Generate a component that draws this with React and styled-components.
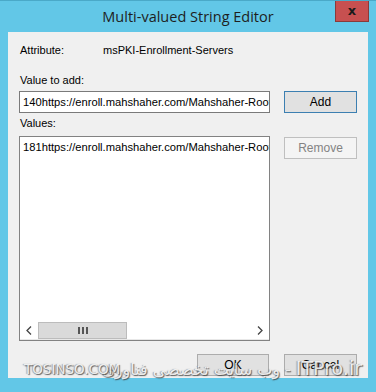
import React from "react";
import styled, { createGlobalStyle } from "styled-components";

const Global = createGlobalStyle`
  html, body { margin: 0; padding: 0; background: #5fc6e6; }
  body { font-family: "Liberation Sans", Arial, sans-serif; }
`;

const Window = styled.div`
  width: 376px;
  height: 392px;
  box-sizing: border-box;
  background: #62c7e7;
  border-top: 1px solid #4aa9c8;
  display: flex;
  flex-direction: column;
  padding: 0 8px 14px 8px;
  position: relative;
  overflow: hidden;
`;

const TitleBar = styled.div`
  height: 31px;
  display: grid;
  grid-template-columns: 1fr auto 1fr;
  align-items: start;
  margin: 0 -8px;
  padding: 0 7px 0 7px;
`;

const Title = styled.div`
  grid-column: 2;
  font-family: "Open Sans", "Noto Sans", sans-serif;
  font-size: 14.5px;
  color: #1e1e1e;
  line-height: 30px;
  padding-top: 1px;
`;

const Close = styled.div`
  grid-column: 3;
  justify-self: end;
  width: 32px;
  height: 21px;
  margin-top: -1px;
  background: #c75050;
  border: 1px solid #8a3a3a;
  border-top: none;
  display: flex;
  align-items: center;
  justify-content: center;
  font-family: "DejaVu Sans", sans-serif;
  font-weight: bold;
  font-size: 13px;
  color: #1a1a1a;
`;

const Content = styled.div`
  flex: 1;
  background: #f0f0f0;
  padding: 11px 11px 0 11px;
  display: flex;
  flex-direction: column;
  font-size: 11px;
  color: #000;
`;

const AttrRow = styled.div`
  display: grid;
  grid-template-columns: 83px 1fr;
  line-height: 14px;
  padding-left: 1px;
`;

const Label = styled.div`
  line-height: 14px;
  margin-top: ${(p) => p.$mt}px;
  padding-left: 1px;
`;

const Grid = styled.div`
  display: grid;
  grid-template-columns: 251px 73px;
  column-gap: 14px;
  margin-top: ${(p) => p.$mt}px;
  align-items: start;
`;

const TextBox = styled.div`
  height: 22px;
  box-sizing: border-box;
  border: 1px solid #7a7a7a;
  background: #fff;
  padding: 0 0 0 3px;
  line-height: 20px;
  font-size: 11.2px;
  white-space: nowrap;
  overflow: hidden;
`;

const ListBox = styled.div`
  height: 205px;
  box-sizing: border-box;
  border: 1px solid #828282;
  background: #fff;
  display: flex;
  flex-direction: column;
`;

const ListItems = styled.div`
  flex: 1;
  padding: 3px 0 0 3px;
  white-space: nowrap;
  overflow: hidden;
  line-height: 14px;
  font-size: 11.2px;
`;

const HScroll = styled.div`
  height: 17px;
  display: flex;
  background: #fff;
  border-bottom: 1px solid #e8e8e8;
`;

const Arrow = styled.div`
  width: 18px;
  display: flex;
  align-items: center;
  justify-content: center;
  color: #444;
`;

const Thumb = styled.div`
  width: 89px;
  box-sizing: border-box;
  background: #dadada;
  border: 1px solid #bcbcbc;
  display: flex;
  align-items: center;
  justify-content: center;
  gap: 2px;
`;

const Grip = styled.span`
  width: 2px;
  height: 7px;
  background: #555;
`;

const Track = styled.div`
  flex: 1;
`;

const Button = styled.div`
  height: 22px;
  box-sizing: border-box;
  width: ${(p) => p.$w || 73}px;
  border: 1px solid ${(p) => (p.$default ? "#3c7fb1" : p.$disabled ? "#bfbfbf" : "#acacac")};
  background: ${(p) => (p.$disabled ? "#f4f4f4" : "#e1e1e1")};
  color: ${(p) => (p.$disabled ? "#838383" : "#000")};
  font-size: 12px;
  display: flex;
  align-items: center;
  justify-content: center;
  margin-top: ${(p) => p.$mt || 0}px;
`;

const Footer = styled.div`
  display: flex;
  justify-content: flex-end;
  gap: 15px;
  margin-top: 13px;
`;

const Watermark = styled.div`
  position: absolute;
  top: ${(p) => p.$top}px;
  ${(p) => (p.$right != null ? `right: ${p.$right}px;` : `left: ${p.$left}px;`)}
  display: flex;
  align-items: baseline;
  gap: 5px;
  font-family: "DejaVu Sans", "Liberation Sans", sans-serif;
  font-size: ${(p) => p.$size}px;
  color: rgba(250, 250, 250, 0.88);
  text-shadow: 1px 1px 1px rgba(60, 60, 60, 0.8), -1px 0 1px rgba(90, 90, 90, 0.5);
  white-space: nowrap;
  pointer-events: none;
`;

const WmSmall = styled.span`
  font-size: 16px;
`;

function ArrowIcon({ dir }) {
  return (
    <svg width="6" height="9" viewBox="0 0 6 9">
      <path
        d={dir === "left" ? "M5 0.5 L1 4.5 L5 8.5" : "M1 0.5 L5 4.5 L1 8.5"}
        fill="none"
        stroke="#444"
        strokeWidth="1.3"
      />
    </svg>
  );
}

export default function App() {
  return (
    <>
      <Global />
      <Window>
        <TitleBar>
          <Title>Multi-valued String Editor</Title>
          <Close>x</Close>
        </TitleBar>
        <Content>
          <AttrRow>
            <span>Attribute:</span>
            <span>msPKI-Enrollment-Servers</span>
          </AttrRow>
          <Label $mt={16}>Value to add:</Label>
          <Grid $mt={4}>
            <TextBox>140https://enroll.mahshaher.com/Mahshaher-Root-CA</TextBox>
            <Button $default>Add</Button>
          </Grid>
          <Label $mt={3}>Values:</Label>
          <Grid $mt={6}>
            <ListBox>
              <ListItems>181https://enroll.mahshaher.com/Mahshaher-Root-CA</ListItems>
              <HScroll>
                <Arrow>
                  <ArrowIcon dir="left" />
                </Arrow>
                <Thumb>
                  <Grip />
                  <Grip />
                  <Grip />
                </Thumb>
                <Track />
                <Arrow>
                  <ArrowIcon dir="right" />
                </Arrow>
              </HScroll>
            </ListBox>
            <Button $disabled $mt={1}>Remove</Button>
          </Grid>
          <Footer>
            <Button $w={72}>OK</Button>
            <Button>Cancel</Button>
          </Footer>
        </Content>
        <Watermark $top={356} $right={14} $size={19} dir="rtl">
          <span>ITPro.ir</span>
          <WmSmall>- وب سایت تخصصی فناوری</WmSmall>
        </Watermark>
        <Watermark $top={360} $left={24} $size={13.5}>
          TOSINSO.COM
        </Watermark>
      </Window>
    </>
  );
}
